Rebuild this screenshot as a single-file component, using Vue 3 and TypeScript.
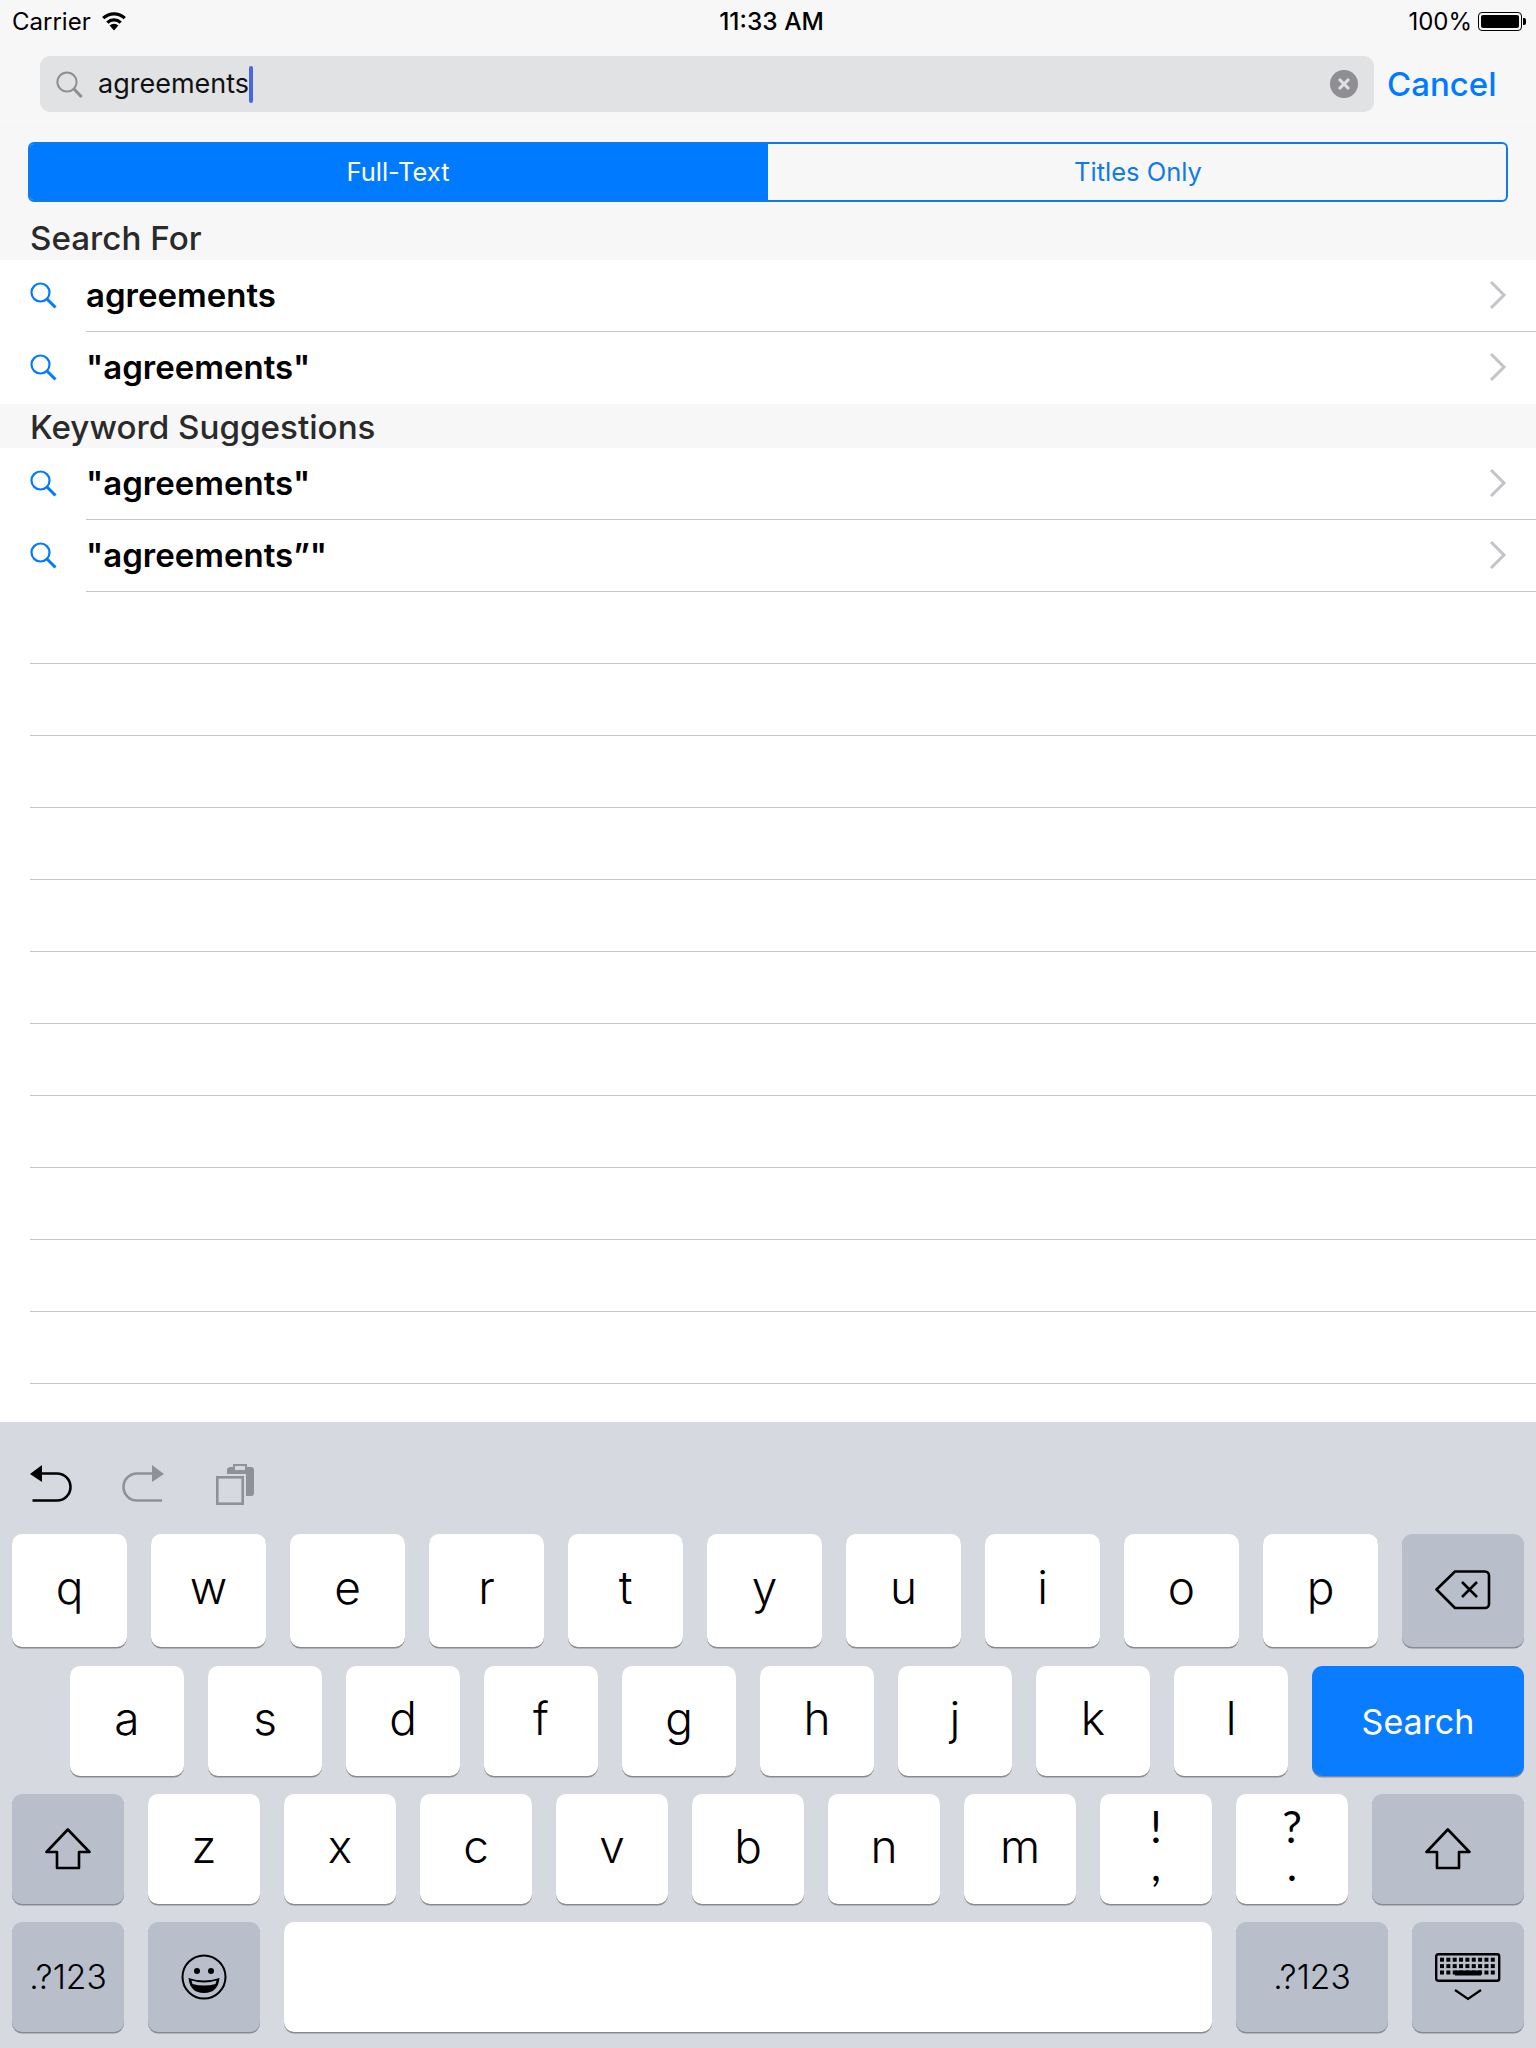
<template>
  <div class="screen">
    <div class="status">
      <div class="status-left">
        <span>Carrier</span>
        <svg class="wifi" width="26" height="19" viewBox="0 0 26 19">
          <path d="M13 18.5 8.6 13.6a6.4 6.4 0 0 1 8.8 0Z" fill="#000" />
          <path d="M6.3 10.6a9.8 9.8 0 0 1 13.4 0" fill="none" stroke="#000" stroke-width="3.2" />
          <path d="M2.2 6.2a15.8 15.8 0 0 1 21.6 0" fill="none" stroke="#000" stroke-width="3.2" />
        </svg>
      </div>
      <div class="status-time">11:33 AM</div>
      <div class="status-right">
        <span>100%</span>
        <div class="battery"><div class="battery-fill"></div></div>
        <div class="battery-nub"></div>
      </div>
    </div>

    <div class="search-row">
      <div class="search-field">
        <svg width="27" height="27" viewBox="0 0 27 27" fill="none" stroke="#8e8e93">
          <circle cx="11" cy="11" r="9.6" stroke-width="2" />
          <path d="M18 18l7.6 8" stroke-width="3" />
        </svg>
        <span class="search-text">agreements</span>
        <span class="caret"></span>
        <svg class="clear" width="28" height="28" viewBox="0 0 28 28">
          <circle cx="14" cy="14" r="14" fill="#8e8e93" />
          <path d="M9 9l10 10M19 9 9 19" stroke="#e1e2e4" stroke-width="3" />
        </svg>
      </div>
      <span class="cancel">Cancel</span>
    </div>

    <div class="seg-wrap">
      <div class="segmented">
        <div class="seg seg-on">Full-Text</div>
        <div class="seg">Titles Only</div>
      </div>
    </div>

    <div class="section section-first">Search For</div>
    <div class="row" v-for="(item, i) in searchFor" :key="'s' + i">
      <svg class="row-icon" width="27" height="27" viewBox="0 0 27 27" fill="none" stroke="#007aff">
        <circle cx="10.5" cy="10.5" r="9" stroke-width="2.2" />
        <path d="M17 17l8.5 8.5" stroke-width="3" />
      </svg>
      <div class="row-body" :class="{ line: i < searchFor.length - 1 }">
        <span>{{ item }}</span>
        <svg width="18" height="30" viewBox="0 0 18 30" fill="none" stroke="#c4c4c8" stroke-width="3"><path d="M2 2l13 13L2 28" /></svg>
      </div>
    </div>

    <div class="section">Keyword Suggestions</div>
    <div class="row" v-for="item in keywords" :key="item">
      <svg class="row-icon" width="27" height="27" viewBox="0 0 27 27" fill="none" stroke="#007aff">
        <circle cx="10.5" cy="10.5" r="9" stroke-width="2.2" />
        <path d="M17 17l8.5 8.5" stroke-width="3" />
      </svg>
      <div class="row-body line">
        <span>{{ item }}</span>
        <svg width="18" height="30" viewBox="0 0 18 30" fill="none" stroke="#c4c4c8" stroke-width="3"><path d="M2 2l13 13L2 28" /></svg>
      </div>
    </div>

    <div class="empty">
      <div class="empty-row" v-for="n in 11" :key="n"></div>
    </div>

    <div class="keyboard">
      <div class="toolbar">
        <svg width="44" height="40" viewBox="0 0 44 40" fill="none" stroke="#000" stroke-width="2.6">
          <path d="M0 10 12 1V18Z" fill="#000" stroke="none" />
          <path d="M11 9.5H27a13.5 13.5 0 0 1 0 27H2.5" />
        </svg>
        <svg width="44" height="40" viewBox="0 0 44 40" fill="none" stroke="#8e9197" stroke-width="2.6">
          <path d="M42 10 30 1V18Z" fill="#8e9197" stroke="none" />
          <path d="M31 9.5H15a13.5 13.5 0 0 0 0 27H40" />
        </svg>
        <svg class="paste" width="40" height="42" viewBox="0 0 40 42">
          <path d="M11 5a4 4 0 0 1 4-2H35a3 3 0 0 1 3 3V28a3 3 0 0 1-3 4H30V10H11Z" fill="#8e9197" />
          <rect x="18" y="1" width="12" height="6" fill="#d5d8df" stroke="#8e9197" stroke-width="2" />
          <rect x="1.3" y="13.3" width="25.4" height="26.4" fill="none" stroke="#8e9197" stroke-width="2.6" />
        </svg>
      </div>

      <div class="keys row-1">
        <div class="key" v-for="k in row1" :key="k">{{ k }}</div>
        <div class="key key-dark key-delete">
          <svg width="56" height="40" viewBox="0 0 56 40" fill="none" stroke="#000" stroke-width="2.6" stroke-linejoin="round">
            <path d="M1.5 19.5 20 1.5H50a4 4 0 0 1 4 4V34a4 4 0 0 1-4 4H20Z" />
            <path d="M27 12l15 15M42 12 27 27" />
          </svg>
        </div>
      </div>

      <div class="keys row-2">
        <div class="key" v-for="k in row2" :key="k">{{ k }}</div>
        <div class="key key-search">Search</div>
      </div>

      <div class="keys row-3">
        <div class="key key-dark key-shift">
          <svg width="46" height="42" viewBox="0 0 46 42" fill="none" stroke="#000" stroke-width="2.6" stroke-linejoin="round"><path d="M22.8 1.5 1.5 24H12V40H34V24H44.5Z" /></svg>
        </div>
        <div class="key" v-for="k in row3" :key="k">{{ k }}</div>
        <div class="key key-two"><span>!</span><span>,</span></div>
        <div class="key key-two"><span>?</span><span>.</span></div>
        <div class="key key-dark key-shift-r">
          <svg width="46" height="42" viewBox="0 0 46 42" fill="none" stroke="#000" stroke-width="2.6" stroke-linejoin="round"><path d="M22.8 1.5 1.5 24H12V40H34V24H44.5Z" /></svg>
        </div>
      </div>

      <div class="keys row-4">
        <div class="key key-dark key-num">.?123</div>
        <div class="key key-dark key-emoji">
          <svg width="46" height="46" viewBox="-23 -23 46 46">
            <circle r="21.5" fill="none" stroke="#000" stroke-width="2" />
            <circle cx="-7" cy="-6" r="3" />
            <circle cx="7" cy="-6" r="3" />
            <path d="M-15.5 1Q0 6 15.5 1Q14 16 0 16Q-14 16-15.5 1Z" />
            <path d="M-12.5 3.5Q0 7.5 12.5 3.5L11.5 7Q0 10-11.5 7Z" fill="#b8bfca" />
          </svg>
        </div>
        <div class="key key-space"></div>
        <div class="key key-dark key-num-r">.?123</div>
        <div class="key key-dark key-hide">
          <svg width="66" height="48" viewBox="0 0 66 48">
            <rect x="1.2" y="1.2" width="63" height="26.6" rx="2" fill="none" stroke="#000" stroke-width="2.4" />
            <template v-for="r in 3" :key="r">
              <rect v-for="c in 9" :key="c" :x="5 + (c - 1) * 6.35" :y="4.7 + (r - 1) * 6.4" width="4" height="4" />
            </template>
            <rect x="20" y="17.5" width="26" height="5" />
            <path d="M20 37l13 9 13-9" fill="none" stroke="#000" stroke-width="2.2" />
          </svg>
        </div>
      </div>
    </div>
  </div>
</template>

<script setup lang="ts">
const searchFor = ['agreements', '"agreements"']
const keywords = ['"agreements"', '"agreements”"']

const row1 = ['q', 'w', 'e', 'r', 't', 'y', 'u', 'i', 'o', 'p']
const row2 = ['a', 's', 'd', 'f', 'g', 'h', 'j', 'k', 'l']
const row3 = ['z', 'x', 'c', 'v', 'b', 'n', 'm']
</script>

<style>
body {
  margin: 0;
}
</style>

<style scoped>
.screen {
  width: 1536px;
  height: 2048px;
  display: flex;
  flex-direction: column;
  overflow: hidden;
  background: #fff;
  font-family: Inter, "Liberation Sans", sans-serif;
  color: #000;
}

.status {
  display: grid;
  grid-template-columns: 1fr auto 1fr;
  align-items: center;
  height: 42px;
  padding: 0 10px 0 12px;
  background: #f7f7f7;
  font-size: 24px;
  flex: none;
}

.status-left {
  display: flex;
  align-items: center;
  gap: 10px;
}

.status-time {
  margin-left: 5px;
  font-size: 24.5px;
  font-weight: 500;
}

.status-right {
  display: flex;
  align-items: center;
  justify-content: flex-end;
}

.battery {
  width: 44px;
  height: 19px;
  box-sizing: border-box;
  margin-left: 6px;
  padding: 2px;
  border: 1px solid #000;
  border-radius: 4px;
}

.battery-fill {
  height: 100%;
  background: #000;
  border-radius: 2px;
}

.battery-nub {
  width: 3px;
  height: 7px;
  margin-left: 1px;
  background: #000;
  border-radius: 0 2px 2px 0;
}

.search-row {
  flex: none;
  height: 85px;
  box-sizing: border-box;
  display: flex;
  padding: 14px 0 15px 40px;
  background: #f7f7f7;
  border-bottom: 1px solid #f2f4f8;
}

.search-field {
  width: 1334px;
  height: 56px;
  box-sizing: border-box;
  display: flex;
  align-items: center;
  padding: 0 16px;
  background: #e1e2e4;
  border-radius: 10px;
}

.search-text {
  margin-left: 15px;
  padding-bottom: 2px;
  font-size: 27px;
  color: #111;
}

.caret {
  width: 4px;
  height: 37px;
  background: #4a67e0;
  border-radius: 2px;
}

.clear {
  margin-left: auto;
}

.cancel {
  margin-left: 13px;
  align-self: center;
  font-size: 33px;
  font-weight: 500;
  color: #007aff;
}

.seg-wrap {
  flex: none;
  height: 75px;
  box-sizing: border-box;
  padding: 15px 28px 0;
  background: #f7f7f7;
}

.segmented {
  height: 60px;
  box-sizing: border-box;
  display: flex;
  border: 2px solid #0f7be8;
  border-radius: 6px;
  overflow: hidden;
}

.seg {
  flex: 1;
  display: flex;
  align-items: center;
  justify-content: center;
  padding-bottom: 2px;
  font-size: 25.5px;
  color: #0f7be8;
}

.seg-on {
  background: #007aff;
  color: #fff;
  padding-right: 2px;
}

.seg:not(.seg-on) {
  padding-left: 2px;
}

.section {
  flex: none;
  height: 44px;
  box-sizing: border-box;
  padding-left: 30px;
  background: #f7f7f7;
  font-size: 33.2px;
  font-weight: 500;
  line-height: 47px;
  color: #2a2a2a;
}

.section-first {
  height: 58px;
  line-height: 44px;
  padding-top: 14px;
}

.row {
  flex: none;
  height: 72px;
  display: flex;
  align-items: center;
  padding-left: 30px;
}

.row-icon {
  flex: none;
  margin-right: 29px;
  margin-bottom: 2px;
}

.row-body {
  flex: 1;
  height: 72px;
  box-sizing: border-box;
  display: flex;
  align-items: center;
  justify-content: space-between;
  padding: 0 29px 2px 0;
  font-size: 33px;
  font-weight: 600;
}

.line {
  border-bottom: 1px solid #c8c7cc;
}

.empty {
  flex: 1;
  min-height: 0;
  overflow: hidden;
  padding-left: 30px;
}

.empty-row {
  height: 72px;
  box-sizing: border-box;
  border-bottom: 1px solid #c8c7cc;
}

.keyboard {
  flex: none;
  height: 626px;
  box-sizing: border-box;
  padding: 0 12px;
  background: #d6d9e0;
}

.toolbar {
  height: 112px;
  box-sizing: border-box;
  display: flex;
  gap: 48px;
  padding: 42px 0 0 18px;
}

.paste {
  margin-left: 2px;
}

.keys {
  display: flex;
  gap: 24px;
}

.row-1 {
  height: 113px;
  margin-bottom: 19px;
}

.row-2 {
  height: 110px;
  margin-bottom: 18px;
  padding-left: 58px;
}

.row-3 {
  height: 110px;
  margin-bottom: 18px;
}

.row-4 {
  height: 110px;
}

.key {
  width: 112px;
  flex: none;
  box-sizing: border-box;
  display: flex;
  align-items: center;
  justify-content: center;
  padding-bottom: 7px;
  background: #fff;
  border-radius: 10px;
  box-shadow: 0 1.5px 0 #8a8b8f;
  font-size: 46px;
  font-weight: 300;
}

.row-1 .key {
  width: 115px;
}

.row-2 .key {
  width: 114px;
}

.key-dark {
  background: #b8bfca;
  padding-bottom: 0;
}

.row-1 .key-delete {
  width: 122px;
  padding-bottom: 2px;
}

.row-2 .key-search {
  width: 212px;
  padding-bottom: 0;
  background: #0a7cff;
  color: #fff;
  font-size: 34px;
  font-weight: 400;
}

.key-shift-r {
  width: 152px;
}

.key-two {
  flex-direction: column;
  padding-bottom: 8px;
  font-family: Lato, Inter, sans-serif;
  font-size: 44px;
  font-weight: 400;
  line-height: 38px;
}

.key-num,
.key-num-r {
  font-size: 33.5px;
}

.key-num-r {
  width: 152px;
}

.key-space {
  width: 928px;
}
</style>
